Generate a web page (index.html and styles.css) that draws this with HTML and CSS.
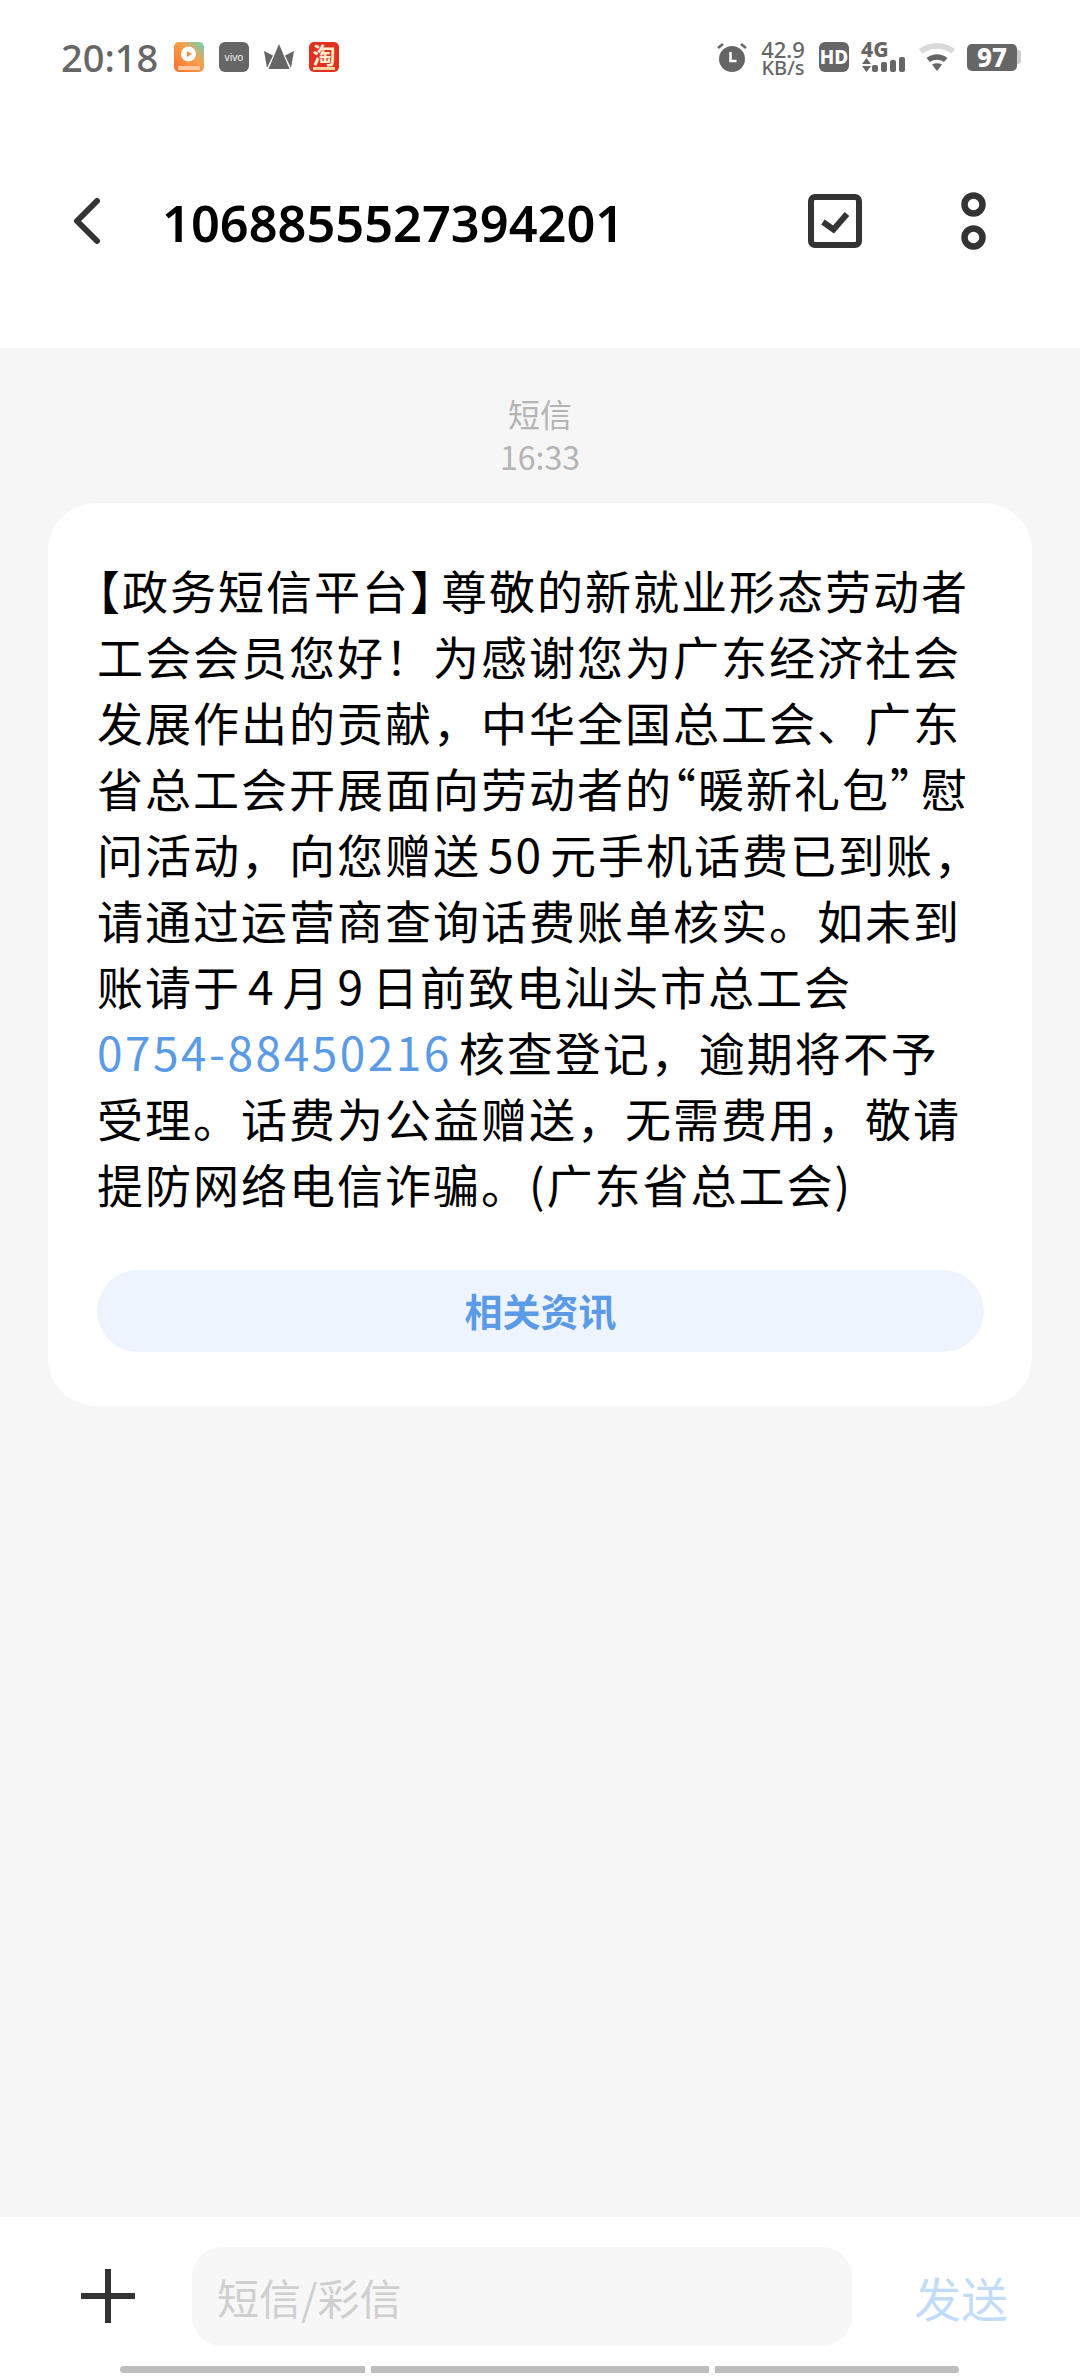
FILE: index.html
```html
<!DOCTYPE html>
<html lang="zh-CN">
<head>
  <meta charset="UTF-8">
  <meta name="viewport" content="width=device-width, initial-scale=1.0">
  <title>短信</title>
  <link rel="stylesheet" href="styles.css">
</head>
<body>
  <div class="phone">
    <div class="statusbar">
      <div class="status-left">
        <span class="time">20:18</span>
        <svg class="app-icon" viewBox="0 0 30 30">
          <defs>
            <linearGradient id="videoBg" x1="0" y1="1" x2="1" y2="0">
              <stop offset="0" stop-color="#f9702c"/>
              <stop offset="0.6" stop-color="#f7a04b"/>
              <stop offset="1" stop-color="#62d6c0"/>
            </linearGradient>
          </defs>
          <rect width="30" height="30" rx="5" fill="url(#videoBg)"/>
          <circle cx="14.5" cy="12" r="7.5" fill="#fff"/>
          <path d="M13 9l5 3-5 3z" fill="#f98a3c"/>
          <rect x="4" y="24" width="22" height="4" rx="1" fill="#ffc9a6"/>
        </svg>
        <svg class="app-icon" viewBox="0 0 30 30">
          <rect width="30" height="30" rx="6" fill="#666"/>
          <text class="vivo" x="15" y="18.500" text-anchor="middle">vivo</text>
        </svg>
        <svg class="app-icon" viewBox="0 0 30 30">
          <path d="M15 2L4.500 27h21z" fill="#666"/>
          <path d="M0 9l9 4.500L3 26zM30 9l-9 4.500L27 26z" fill="#666"/>
        </svg>
        <svg class="app-icon" viewBox="0 0 30 30">
          <rect width="30" height="30" rx="5" fill="#e0301f"/>
          <text class="tao" x="15" y="22" text-anchor="middle">淘</text>
          <rect x="4" y="25" width="22" height="3" fill="#f9d3a0"/>
        </svg>
      </div>
      <div class="status-right">
        <svg class="alarm" viewBox="0 0 30 30">
          <path d="M1 6l5-4M29 6l-5-4" stroke="#666" stroke-width="2.500" fill="none"/>
          <circle cx="15" cy="17" r="13" fill="#666"/>
          <path d="M13.500 10v9h6" fill="none" stroke="#fff" stroke-width="2.500"/>
        </svg>
        <div class="speed"><span class="speed-val">42.9</span><span class="speed-unit">KB/s</span></div>
        <div class="hd">HD</div>
        <div class="net">
          <span class="net-type">4G</span>
          <svg class="signal" viewBox="0 0 44 16">
            <path d="M1 7l4.500-6L10 7zM1 9l4.500 6L10 9z" fill="#666"/>
            <rect x="11" y="8" width="6" height="7" rx="2" fill="#666"/>
            <rect x="20" y="5" width="6" height="10" rx="2" fill="#666"/>
            <rect x="29" y="3" width="6" height="12" rx="2" fill="#666"/>
            <rect x="38" y="0" width="6" height="15" rx="2" fill="#666"/>
          </svg>
        </div>
        <svg class="wifi" viewBox="0 0 36 28">
          <path d="M0 6C10-2 26-2 36 6l-3.500 4.500C24 4 12 4 3.500 10.500z" fill="#d9d9d9"/>
          <path d="M7.500 15c7-5 14-5 21 0l-3.500 4c-4.500-3-9.500-3-14 0z" fill="#666"/>
          <path d="M13 21.500c3-1.800 7-1.800 10 0L18 28z" fill="#666"/>
        </svg>
        <div class="battery"><span class="level">97</span><span class="cap"></span></div>
      </div>
    </div>

    <header class="topbar">
      <svg class="back" viewBox="0 0 30 48">
        <path d="M26 4L6 24l20 20" fill="none" stroke="#333" stroke-width="6" stroke-linecap="round" stroke-linejoin="round"/>
      </svg>
      <h1>1068855527394201</h1>
      <svg class="check" viewBox="0 0 54 54">
        <rect x="3" y="3" width="48" height="48" rx="4" fill="none" stroke="#333" stroke-width="6"/>
        <path d="M15 28l10.500 7.500L39 20" fill="none" stroke="#333" stroke-width="6"/>
      </svg>
      <svg class="more" viewBox="0 0 25 58">
        <circle cx="12.500" cy="12.500" r="9" fill="none" stroke="#333" stroke-width="6.500"/>
        <circle cx="12.500" cy="45.500" r="9" fill="none" stroke="#333" stroke-width="6.500"/>
      </svg>
    </header>

    <main class="thread">
      <div class="msg-meta">
        <div class="msg-type">短信</div>
        <div class="msg-time">16:33</div>
      </div>
      <section class="bubble">
        <p class="msg-text"><span class="halt">【</span>政务短信平台<span class="halt halt-gap">】</span>尊敬的新就业形态劳动者<br>工会会员您好！为感谢您为广东经济社会<br>发展作出的贡献，中华全国总工会、广东<br>省总工会开展面向劳动者的<span class="halt">“</span>暖新礼包<span class="halt halt-gap">”</span>慰<br>问活动，向您赠送<span class="num">50</span>元手机话费已到账，<br>请通过运营商查询话费账单核实。如未到<br>账请于<span class="num">4</span>月<span class="num">9</span>日前致电汕头市总工会<br><a class="phone-link">0754-88450216</a><span class="after-link">核查登记，逾期将不予</span><br>受理。话费为公益赠送，无需费用，敬请<br>提防网络电信诈骗。(广东省总工会)</p>
        <button class="news-btn">相关资讯</button>
      </section>
    </main>

    <footer class="composer">
      <svg class="plus" viewBox="0 0 54 54">
        <path d="M0 27h54M27 0v54" stroke="#333" stroke-width="6"/>
      </svg>
      <div class="input">短信/彩信</div>
      <span class="send">发送</span>
    </footer>
    <div class="home-bar">
      <span class="seg seg-a"></span>
      <span class="seg seg-b"></span>
      <span class="seg seg-c"></span>
    </div>
  </div>
</body>
</html>
```

FILE: styles.css
```css
* {
  box-sizing: border-box;
}
body {
  margin: 0;
  background-color: #fff;
  font-family: 'Noto Sans CJK SC', 'Noto Sans', sans-serif;
  color: #000;
}
.phone {
  width: 1080px;
  height: 2376px;
  display: flex;
  flex-direction: column;
  overflow: hidden;
}
.statusbar {
  height: 114px;
  padding: 0 59px 0 61px;
  display: flex;
  justify-content: space-between;
  align-items: center;
  color: #666;
}
.status-left, .status-right {
  display: flex;
  align-items: center;
}
.time {
  font-family: 'Noto Sans', sans-serif;
  font-size: 38px;
  font-weight: 500;
  width: 113px;
}
.app-icon {
  width: 30px;
  height: 30px;
  margin-right: 15px;
  overflow: visible;
}
.vivo {
  font-family: 'Noto Sans', sans-serif;
  font-size: 10px;
  fill: #f2f2f2;
}
.tao {
  font-family: 'Noto Sans CJK SC', sans-serif;
  font-size: 23px;
  font-weight: 700;
  fill: #fdeccf;
}
.alarm {
  width: 30px;
  height: 30px;
  margin-right: 13px;
}
.speed {
  display: flex;
  flex-direction: column;
  align-items: center;
  font-family: 'Noto Sans', sans-serif;
  font-weight: 500;
  width: 46px;
  margin-right: 13px;
}
.speed-val {
  font-size: 22px;
  line-height: 20px;
}
.speed-unit {
  font-size: 20px;
  line-height: 17px;
}
.hd {
  width: 30px;
  height: 30px;
  border-radius: 6px;
  background-color: #666;
  color: #fff;
  font-family: 'Noto Sans', sans-serif;
  font-size: 19px;
  font-weight: 800;
  line-height: 30px;
  text-align: center;
  margin-right: 12px;
}
.net {
  width: 44px;
  display: flex;
  flex-direction: column;
}
.net-type {
  font-family: 'Noto Sans', sans-serif;
  font-size: 21px;
  font-weight: 800;
  line-height: 16px;
}
.signal {
  width: 44px;
  height: 16px;
}
.wifi {
  width: 36px;
  height: 28px;
  margin: 0 12px 0 14px;
}
.battery {
  display: flex;
  align-items: center;
}
.level {
  width: 50px;
  height: 27px;
  border-radius: 5px;
  background-color: #666;
  color: #fff;
  font-family: 'Noto Sans', sans-serif;
  font-size: 26px;
  font-weight: 800;
  line-height: 27px;
  text-align: center;
}
.cap {
  width: 4px;
  height: 14px;
  background-color: #ccc;
  border-radius: 0 3px 3px 0;
}
.topbar {
  height: 234px;
  padding-bottom: 20px;
  display: flex;
  align-items: center;
}
.back {
  width: 30px;
  height: 48px;
  margin-left: 71px;
}
.topbar h1 {
  margin: 3px 0 0 61px;
  width: 646px;
  font-family: 'Noto Sans', sans-serif;
  font-size: 50.5px;
  font-weight: 600;
  color: #000;
}
.check {
  width: 54px;
  height: 54px;
}
.more {
  width: 25px;
  height: 58px;
  margin-left: 99px;
}
.thread {
  flex: 1;
  background-color: #f6f6f6;
  padding: 44px 48px 0;
}
.msg-meta {
  text-align: center;
  color: #b4b4b4;
  font-size: 32px;
  line-height: 43px;
}
.bubble {
  margin-top: 25px;
  padding: 53px 48px 54px 49px;
  background-color: #fff;
  border-radius: 48px;
}
.msg-text {
  margin: 0;
  font-size: 46px;
  letter-spacing: 2px;
  line-height: 66px;
  white-space: nowrap;
  color: #000;
}
.halt {
  font-feature-settings: "halt";
}
.halt-gap {
  margin-right: 6px;
}
.num {
  margin: 0 7px;
}
.phone-link {
  color: #5a9ae6;
  letter-spacing: 2.5px;
}
.after-link {
  margin-left: 7px;
}
.news-btn {
  display: block;
  width: 100%;
  height: 82px;
  margin-top: 54px;
  padding: 0 0 3px;
  border: none;
  border-radius: 41px;
  background-color: #edf4fe;
  color: #5a9ae6;
  font-family: inherit;
  font-size: 38px;
  font-weight: 700;
}
.composer {
  height: 149px;
  padding: 30px 0 0 81px;
  background-color: #fff;
  display: flex;
  align-items: flex-start;
}
.plus {
  width: 54px;
  height: 54px;
  margin-top: 22px;
}
.input {
  width: 660px;
  height: 99px;
  margin-left: 57px;
  padding-left: 25px;
  border-radius: 30px;
  background-color: #f7f7f7;
  color: #cfcfcf;
  font-size: 42px;
  line-height: 99px;
}
.send {
  margin-left: 62px;
  font-size: 47px;
  line-height: 99px;
  color: #c2dcf8;
}
.home-bar {
  height: 7px;
  margin-bottom: 3px;
  padding-left: 120px;
  display: flex;
  gap: 6px;
}
.seg {
  height: 7px;
  background-color: #bdbdbd;
}
.seg-a {
  width: 245px;
  border-radius: 4px 1px 1px 4px;
}
.seg-b {
  width: 338px;
  border-radius: 1px;
}
.seg-c {
  width: 244px;
  border-radius: 1px 4px 4px 1px;
}
```
